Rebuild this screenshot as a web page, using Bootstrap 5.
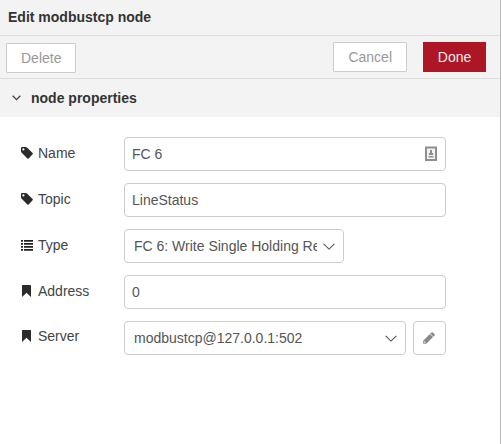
<!DOCTYPE html>
<html lang="en">
<head>
<meta charset="utf-8">
<meta name="viewport" content="width=device-width, initial-scale=1">
<title>Edit modbustcp node</title>
<link href="https://cdn.jsdelivr.net/npm/bootstrap@5.3.0/dist/css/bootstrap.min.css" rel="stylesheet">
<style>
  body { font: 14px/20px "Liberation Sans", Arial, sans-serif; color: #444; background: #fff; }
  .tray { width: 501px; border-right: 1px solid #bbb; }
  .tray-title, .tray-toolbar, .section-title { background: #f3f3f3; color: #333; }
  .tray-title { height: 36px; padding: 7px 8px; border-bottom: 1px solid #ddd; }
  .tray-toolbar { height: 43px; padding: 6px 14px 0 6px; border-bottom: 1px solid #ddd; }
  .section-title { height: 38px; padding-left: 12px; }
  .section-title svg { margin-right: 10px; }
  .tray .btn { --bs-btn-font-size: 14px; --bs-btn-line-height: 20px; --bs-btn-border-radius: 0; --bs-btn-padding-y: 4px; --bs-btn-padding-x: 14px; height: 30px; }
  .tray .btn-plain { --bs-btn-bg: #fff; --bs-btn-color: #999; --bs-btn-border-color: #ccc; --bs-btn-border-radius: 1px; }
  .tray .btn-done { --bs-btn-bg: #ad1625; --bs-btn-color: #eee; --bs-btn-border-color: #ad1625; width: 63px; }
  .btn-delete { margin-top: 1px; }
  .edit-form { padding: 20px 0 0 21px; gap: 12px; }
  .edit-form .form-label { width: 103px; height: 34px; padding-top: 6px; }
  .edit-form .label-server { padding-top: 5px; }
  .edit-form .form-label svg { margin: 4px 5px 0 0; }
  .edit-form .form-control, .combo { font-size: 14px; line-height: 20px; width: 322px; height: 34px; padding: 6px 7px; color: #555; border: 1px solid #ccc; border-radius: 4px; background: #fff; }
  .edit-form .combo { padding: 6px 8px 6px 9px; }
  .edit-form .combo svg { margin-left: 6px; }
  .edit-form .combo-type { width: 220px; }
  .edit-form .combo-server { width: 282px; }
  .tray .btn-pencil { --bs-btn-border-radius: 4px; width: 33px; height: 34px; padding: 0 1px 0 0; margin-left: 7px; }
  .field-badge { right: 9px; top: 9px; }
</style>
</head>
<body>
<svg class="d-none">
  <symbol id="tag" viewBox="0 0 12 12"><path fill="#2b2b2b" fill-rule="evenodd" d="M0 1Q0 0 1 0H4.6Q5.4 0 6 .6L11.6 6.1Q12.1 6.7 11.6 7.3L7.6 11.4Q7 12 6.4 11.4L.7 5.7Q0 5 0 4.3ZM2.4 1.3A1.1 1.1 0 1 0 2.4 3.5A1.1 1.1 0 1 0 2.4 1.3Z"/></symbol>
  <symbol id="list" viewBox="0 0 12 12"><path fill="#222" d="M0 1h2v1.7H0zM0 4h2v1.7H0zM0 7h2v1.7H0zM0 10h2v1.7H0zM3 1h9v1.7H3zM3 4h9v1.7H3zM3 7h9v1.7H3zM3 10h9v1.7H3z"/></symbol>
  <symbol id="flag" viewBox="0 0 12 12"><path fill="#2b2b2b" d="M1.5 0H9.5Q10 0 10 .5V12L5.5 7.8L1 12V.5Q1 0 1.5 0Z"/></symbol>
  <symbol id="down" viewBox="0 0 12 7"><path fill="none" stroke="#555" stroke-width="1.1" d="M.6.8L6 6.1L11.4.8"/></symbol>
</svg>
<div class="tray vh-100 overflow-hidden">
  <div class="tray-title fw-bold">Edit modbustcp node</div>
  <div class="tray-toolbar d-flex align-items-start">
    <button class="btn btn-plain btn-delete me-auto" type="button">Delete</button>
    <button class="btn btn-plain me-3" type="button">Cancel</button>
    <button class="btn btn-done px-0" type="button">Done</button>
  </div>
  <div class="section-title d-flex align-items-center fw-bold">
    <svg width="9" height="6" viewBox="0 0 9 6"><path d="M.7.8L4.5 4.6L8.3.8" fill="none" stroke="#444" stroke-width="1.3"/></svg>node properties
  </div>
  <form class="edit-form d-flex flex-column">
    <div class="d-flex">
      <label class="form-label d-flex mb-0" for="name"><svg width="12" height="12"><use href="#tag"/></svg>Name</label>
      <div class="position-relative">
        <input class="form-control" id="name" type="text" value="FC 6">
        <svg class="field-badge position-absolute" width="12" height="16" viewBox="0 0 12 16"><rect x="1" y="1.5" width="10" height="12.5" fill="#f4f4f4" stroke="#8e8e8e" stroke-width="2"/><path d="M5 4h2v3h1.2v2H3.8V7H5zM3.5 10h5v1.5h-5z" fill="#8e8e8e"/></svg>
      </div>
    </div>
    <div class="d-flex">
      <label class="form-label d-flex mb-0" for="topic"><svg width="12" height="12"><use href="#tag"/></svg>Topic</label>
      <input class="form-control" id="topic" type="text" value="LineStatus">
    </div>
    <div class="d-flex">
      <label class="form-label d-flex mb-0"><svg width="12" height="12"><use href="#list"/></svg>Type</label>
      <div class="combo combo-type d-flex align-items-center" role="button">
        <span class="overflow-hidden text-nowrap flex-fill">FC 6: Write Single Holding Register</span>
        <svg class="flex-shrink-0" width="12" height="7"><use href="#down"/></svg>
      </div>
    </div>
    <div class="d-flex">
      <label class="form-label d-flex mb-0" for="address"><svg width="12" height="12"><use href="#flag"/></svg>Address</label>
      <input class="form-control" id="address" type="text" value="0">
    </div>
    <div class="d-flex">
      <label class="form-label label-server d-flex mb-0"><svg width="12" height="12"><use href="#flag"/></svg>Server</label>
      <div class="combo combo-server d-flex align-items-center" role="button">
        <span class="overflow-hidden text-nowrap flex-fill">modbustcp@127.0.0.1:502</span>
        <svg class="flex-shrink-0" width="12" height="7"><use href="#down"/></svg>
      </div>
      <button class="btn btn-plain btn-pencil d-flex align-items-center justify-content-center" type="button" aria-label="Edit">
        <svg width="12" height="12" viewBox="0 0 12 12"><path fill="#888" fill-rule="evenodd" d="M.2 11.8V8.7L6.9 2L10 5.1L3.3 11.8ZM1.2 9.6V10.8H2.4L2.8 10.4L1.6 9.2ZM7.3 1.6L8.6.4Q9.2-.1 9.8.4L11.6 2.2Q12.1 2.8 11.6 3.4L10.4 4.7Z"/></svg>
      </button>
    </div>
  </form>
</div>
</body>
</html>
